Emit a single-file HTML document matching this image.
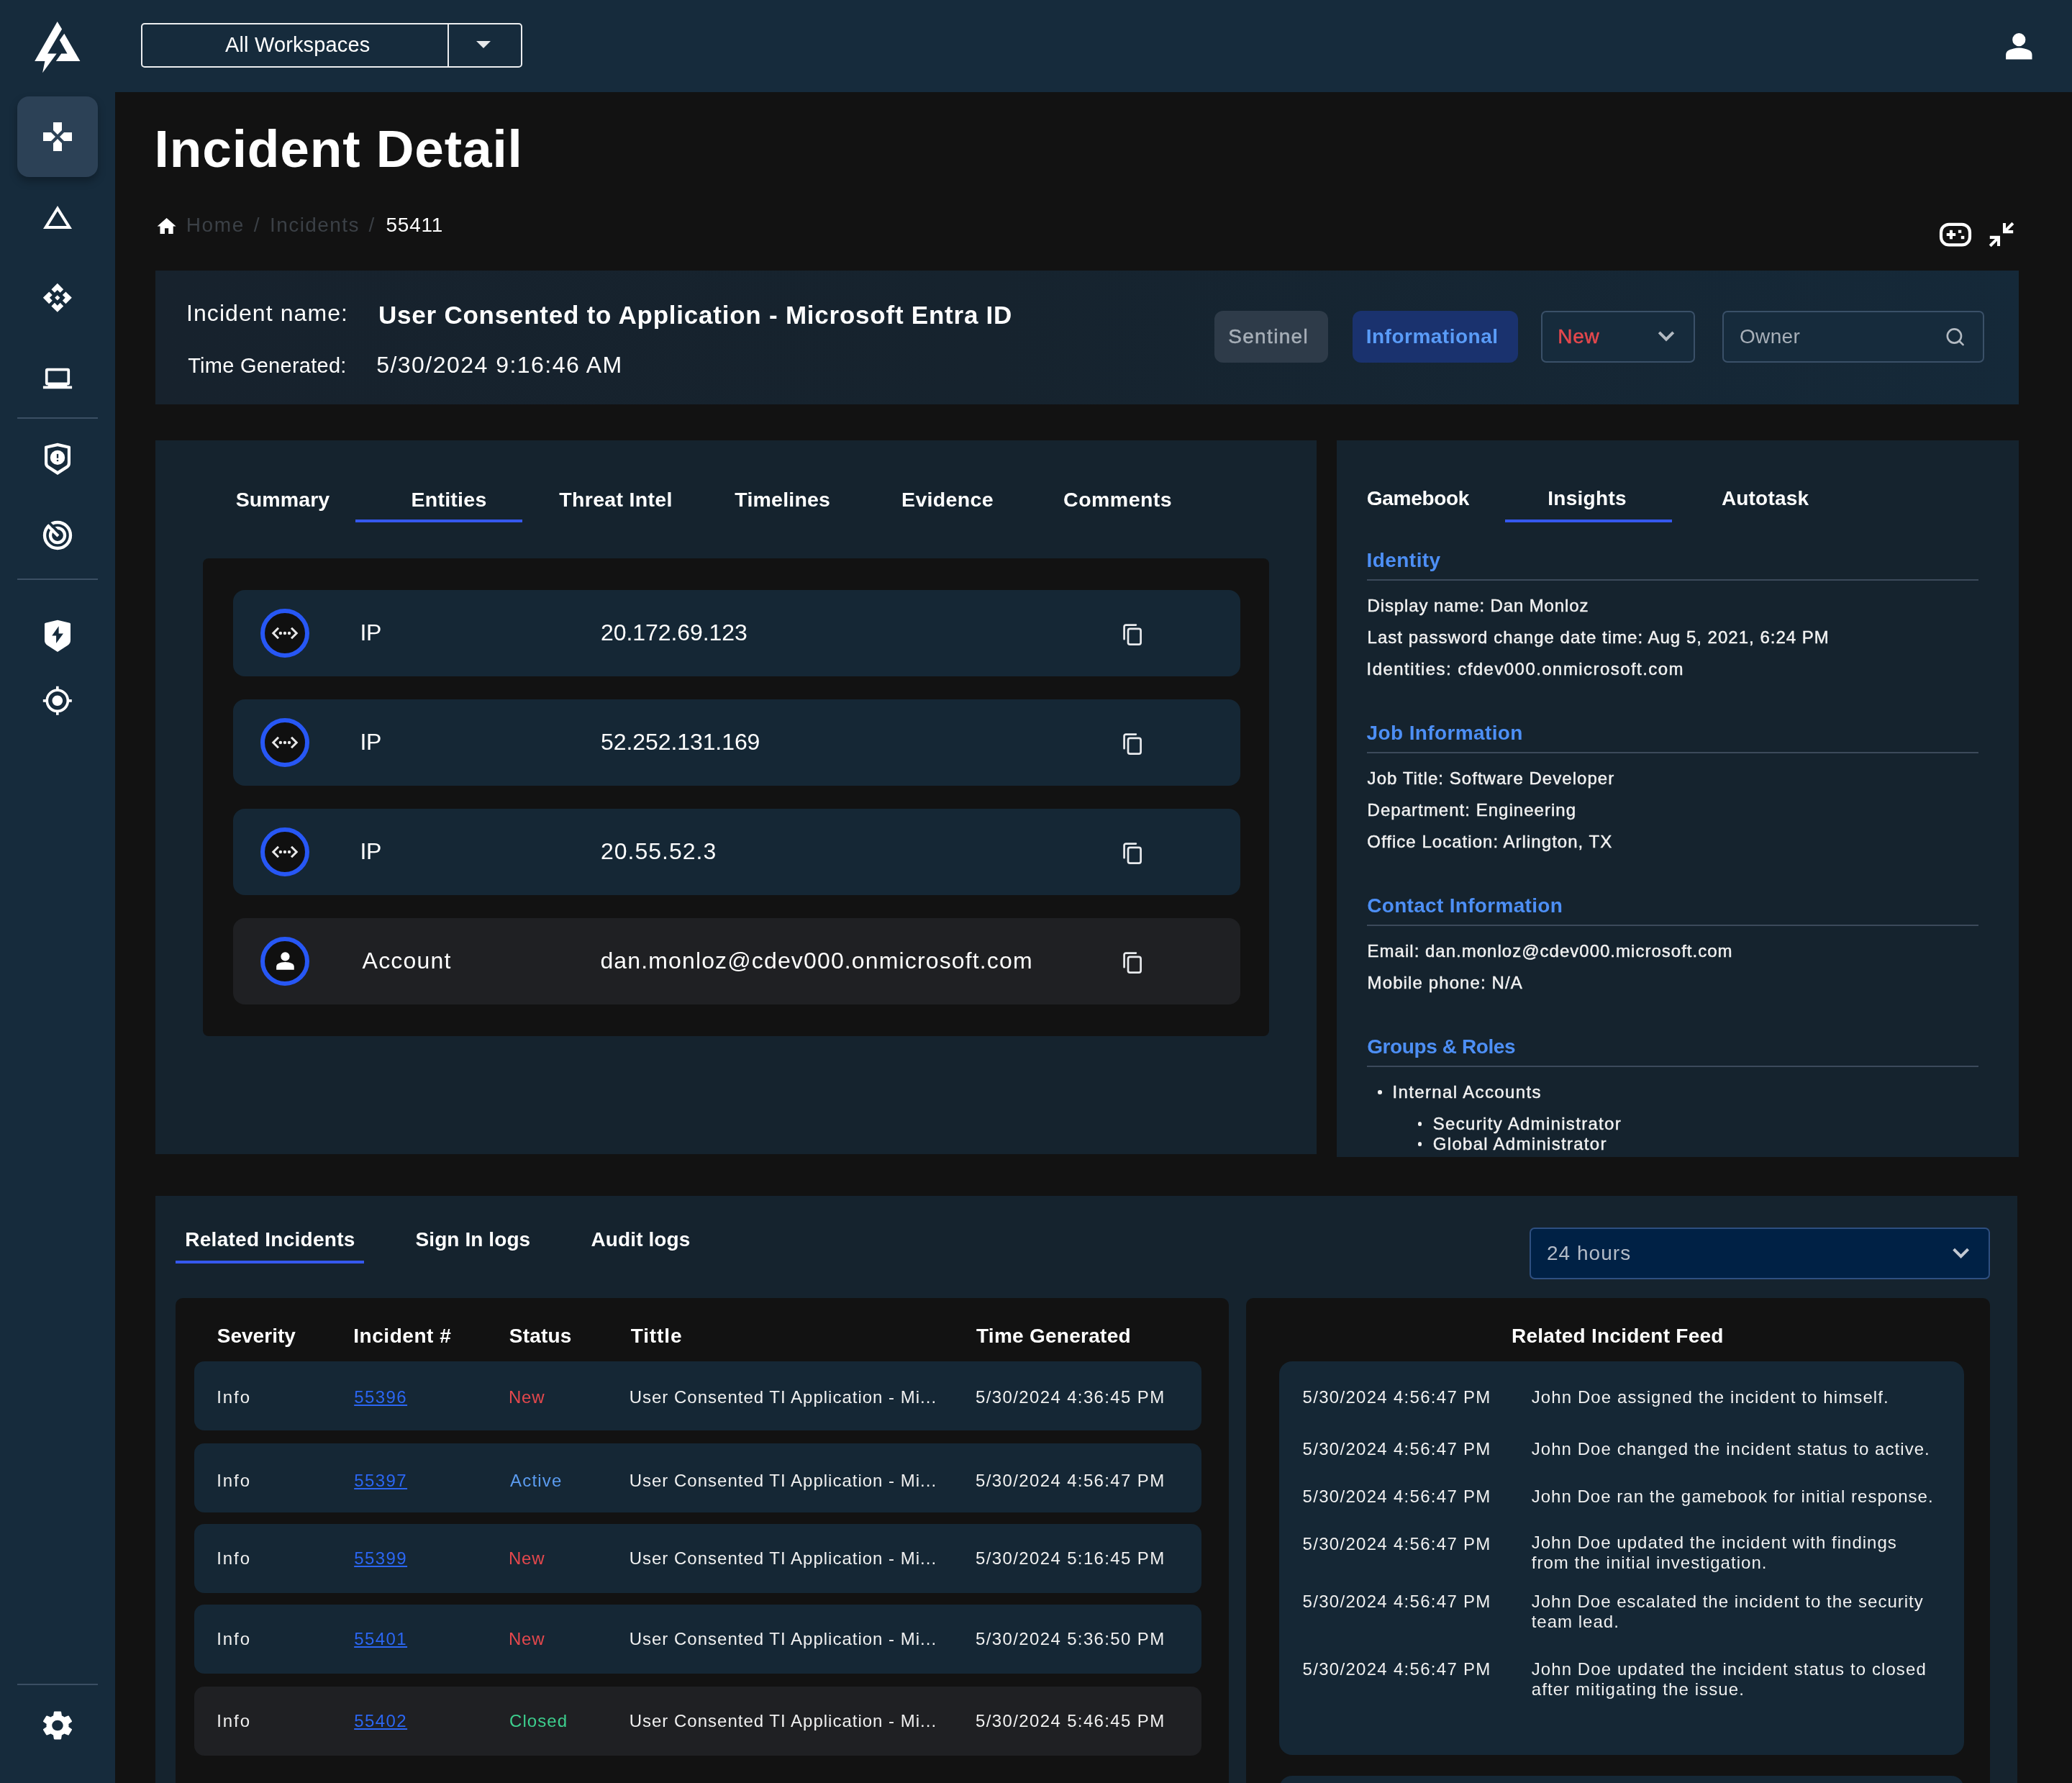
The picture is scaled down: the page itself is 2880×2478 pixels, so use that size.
<!DOCTYPE html>
<html lang="en"><head><meta charset="utf-8"><title>Incident Detail</title>
<meta name="viewport" content="width=2880">
<style>
*{box-sizing:border-box;margin:0;padding:0}
html,body{width:2880px;height:2478px;background:#121212}
body{position:relative;font-family:"Liberation Sans",sans-serif;color:#fff;-webkit-font-smoothing:antialiased}
#app{position:absolute;left:0;top:0;width:2880px;height:2478px;overflow:hidden;will-change:transform}
.t{position:absolute;white-space:nowrap;font-weight:400;display:block;text-decoration:none;color:#fff}
.ic{position:absolute;display:block;overflow:visible}
ul,li{list-style:none}
hr{position:absolute;border:0;background:#3b4f63}
.sidebar{position:absolute;left:0;top:0;width:160px;height:2478px;background:#162b3c}
.nav-item{position:absolute;display:block;border-radius:16px}
.nav-item.active{background:#2c4156;box-shadow:0 6px 12px rgba(0,0,0,.28)}
.topbar{position:absolute;left:160px;top:0;width:2720px;height:128px;background:#162b3c}
.ws{position:absolute;border:2px solid #eceef0;border-radius:5px}
.ws-div{position:absolute;top:0;bottom:0;width:2px;background:#eceef0}
.card{position:absolute;background:linear-gradient(90deg,#17222d 0%,#16232e 45%,#152939 100%)}
.badge{position:absolute;border-radius:12px}
.b-sent{background:#2e3b49}.b-info{background:#1a326e}
.sel{position:absolute;border-radius:7px;border:2px solid #3a5068;background:#162b3c}
.s-24{background:#002145;border-color:#2e4f80}
.panel{position:absolute;background:#15232e;overflow:hidden}
.panel hr{background:#3c4a5b}
.ul{position:absolute;background:#3558ee}
.ents{position:absolute;background:#121212;border-radius:8px}
.ent{position:absolute;background:#152735;border-radius:16px}
.gray{background:#1f2023 !important}
.circ{position:absolute;border-radius:50%;border:6px solid #2757f5;background:#101010}
.dot{position:absolute;border-radius:50%;background:#f2f2f2}
.blk{position:absolute;background:#121212;border-radius:10px}
.tr{position:absolute;background:#152735;border-radius:14px}
.feed{position:absolute;background:#152735;border-radius:18px}
</style></head><body><div id="app">
<aside class="sidebar">
<svg class="ic" style="left:40px;top:20px;width:80px;height:90px;" viewBox="40 20 80 90" fill="#fff"><polygon points="79.7,30 86.1,40.5 66.1,74.5 78.7,74.5 59.1,101.3 62.4,85 48.2,85"/><polygon points="89.3,46.7 111.4,85 77.8,85 85.2,74.5 93.5,74.5 82.9,55.7"/></svg>
<nav>
<a class="nav-item active" style="left:24px;top:134px;width:112px;height:112px;"><svg class="ic" style="left:32px;top:32px;width:48px;height:48px;" viewBox="0 0 24 24" fill="#fff"><path d="M15 7.5V2H9v5.5l3 3 3-3zM7.5 9H2v6h5.5l3-3-3-3zM9 16.5V22h6v-5.5l-3-3-3 3zM16.5 9l-3 3 3 3H22V9h-5.5z"/></svg></a>
<a class="nav-item" style="left:24px;top:246px;width:112px;height:112px;"><svg class="ic" style="left:32px;top:32px;width:48px;height:48px;" viewBox="0 0 24 24" fill="#fff"><path d="M12 7.77L18.39 18H5.61L12 7.77M12 4L2 20h20L12 4z"/></svg></a>
<a class="nav-item" style="left:24px;top:358px;width:112px;height:112px;"><svg class="ic" style="left:34.18px;top:34.2px;width:43.64px;height:43.64px;" viewBox="0 0 24 24" fill="#fff"><path d="M14 12l-2 2-2-2 2-2 2 2zm-2-6l2.12 2.12 2.5-2.5L12 1 7.38 5.62l2.5 2.5L12 6zm-6 6l2.12-2.12-2.5-2.5L1 12l4.62 4.62 2.5-2.5L6 12zm12 0l-2.12 2.12 2.5 2.5L23 12l-4.62-4.62-2.5 2.5L18 12zm-6 6l-2.12-2.12-2.5 2.5L12 23l4.62-4.62-2.5-2.5L12 18z"/></svg></a>
<a class="nav-item" style="left:24px;top:470px;width:112px;height:100px;"><svg class="ic" style="left:32px;top:36px;width:48px;height:40px;" viewBox="56 506 48 40" fill="#fff"><path fill-rule="evenodd" d="M66 511.8 h28 a3.1 3.1 0 0 1 3.1 3.1 v17.3 a3.1 3.1 0 0 1 -3.1 3.1 h-0.6 v1.2 h6.7 v3.8 h-40.2 v-3.8 h6.7 v-1.2 h-0.6 a3.1 3.1 0 0 1 -3.1 -3.1 v-17.3 a3.1 3.1 0 0 1 3.1 -3.1 z M66.6 515.5 v15.9 h26.8 v-15.9 z"/></svg></a>
<hr style="left:24px;top:580px;width:112px;height:2px;">
<a class="nav-item" style="left:24px;top:590px;width:112px;height:100px;"><svg class="ic" style="left:32px;top:24px;width:48px;height:48px;" viewBox="0 0 24 24" fill="#fff"><path fill-rule="evenodd" d="M12 0.9 L20.4 2.9 Q21 3.05 21 3.7 V14.7 Q21 17 19.15 18.35 L12 23.05 L4.85 18.35 Q3 17 3 14.7 V3.7 Q3 3.05 3.6 2.9 Z M12 3.15 L18.92 4.62 V14.6 Q18.92 15.9 17.9 16.6 L12 20.4 L6.1 16.6 Q5.08 15.9 5.08 14.6 V4.62 Z"/><circle cx="12" cy="10.94" r="5.1"/><rect x="11.42" y="8.45" width="1.18" height="2.95" fill="#162b3c"/><rect x="11.42" y="12.57" width="1.18" height="1" fill="#162b3c"/></svg></a>
<a class="nav-item" style="left:24px;top:694px;width:112px;height:100px;"><svg class="ic" style="left:32px;top:26px;width:48px;height:48px;" viewBox="56 720 48 48" fill="#fff"><defs><clipPath id="rc"><circle cx="80" cy="744" r="20.15"/></clipPath></defs><g fill="none" stroke="#fff"><circle cx="80" cy="744" r="17.98" stroke-width="4.35"/><circle cx="80" cy="744" r="10.05" stroke-width="4.3"/></g><line x1="82.83" y1="741.17" x2="65.5" y2="723.84" stroke="#162b3c" stroke-width="3.9"/><line x1="80.94" y1="744.94" x2="64" y2="728" stroke="#fff" stroke-width="4.1" clip-path="url(#rc)"/></svg></a>
<hr style="left:24px;top:804px;width:112px;height:2px;">
<a class="nav-item" style="left:24px;top:834px;width:112px;height:100px;"><svg class="ic" style="left:32px;top:26px;width:48px;height:48px;" viewBox="0 0 24 24" fill="#fff"><path d="M12 0.9 L20.4 2.9 Q21 3.05 21 3.7 V14.7 Q21 17 19.15 18.35 L12 23.05 L4.85 18.35 Q3 17 3 14.7 V3.7 Q3 3.05 3.6 2.9 Z"/><polygon fill="#162b3c" points="12.8,5.15 8.1,11.75 11.05,11.75 11.05,16.95 16,10.2 12.8,10.2"/></svg></a>
<a class="nav-item" style="left:24px;top:934px;width:112px;height:80px;"><svg class="ic" style="left:34.18px;top:18.2px;width:43.64px;height:43.64px;" viewBox="0 0 24 24" fill="#fff"><path d="M12 8c-2.21 0-4 1.79-4 4s1.79 4 4 4 4-1.79 4-4-1.79-4-4-4zm8.94 3c-.46-4.17-3.77-7.48-7.94-7.94V1h-2v2.06C6.83 3.52 3.52 6.83 3.06 11H1v2h2.06c.46 4.17 3.77 7.48 7.94 7.94V23h2v-2.06c4.17-.46 7.48-3.77 7.94-7.94H23v-2h-2.06zM12 19c-3.87 0-7-3.13-7-7s3.13-7 7-7 7 3.13 7 7-3.13 7-7 7z"/></svg></a>
</nav>
<hr style="left:24px;top:2340px;width:112px;height:2px;">
<a class="nav-item" style="left:24px;top:2350px;width:112px;height:100px;"><svg class="ic" style="left:32px;top:24px;width:48px;height:48px;" viewBox="0 0 24 24" fill="#fff"><path transform="translate(12 12) scale(1.075 1.01) translate(-12 -12)" d="M19.14 12.94c.04-.3.06-.61.06-.94 0-.32-.02-.64-.07-.94l2.03-1.58c.18-.14.23-.41.12-.61l-1.92-3.32c-.12-.22-.37-.29-.59-.22l-2.39.96c-.5-.38-1.03-.7-1.62-.94l-.36-2.54c-.04-.24-.24-.41-.48-.41h-3.84c-.24 0-.43.17-.47.41l-.36 2.54c-.59.24-1.13.57-1.62.94l-2.39-.96c-.22-.08-.47 0-.59.22L2.74 8.87c-.12.21-.08.47.12.61l2.03 1.58c-.05.3-.09.63-.09.94s.02.64.07.94l-2.03 1.58c-.18.14-.23.41-.12.61l1.92 3.32c.12.22.37.29.59.22l2.39-.96c.5.38 1.03.7 1.62.94l.36 2.54c.05.24.24.41.48.41h3.84c.24 0 .44-.17.47-.41l.36-2.54c.59-.24 1.13-.56 1.62-.94l2.39.96c.22.08.47 0 .59-.22l1.92-3.32c.12-.22.07-.47-.12-.61l-2.01-1.58zM12 15.6c-1.98 0-3.6-1.62-3.6-3.6s1.62-3.6 3.6-3.6 3.6 1.62 3.6 3.6-1.62 3.6-3.6 3.6z"/></svg></a>
</aside>
<header class="topbar">
<div class="ws" style="left:36px;top:32px;width:530px;height:62px;">
<span class="t" style="left:115px;top:14.3px;font-size:29px;line-height:29px;letter-spacing:0.15px;">All Workspaces</span>
<i class="ws-div" style="left:424px"></i>
<svg class="ic" style="left:464px;top:23px;width:20px;height:10px;" viewBox="0 0 20 10" fill="#e6e8ea"><polygon points="0,0 20,0 10,10"/></svg>
</div>
<svg class="ic" style="left:2618.8px;top:36.5px;width:54.6px;height:54.6px;" viewBox="0 0 24 24" fill="#fff"><path d="M12 12q-1.65 0-2.825-1.175T8 8q0-1.65 1.175-2.825T12 4q1.65 0 2.825 1.175T16 8q0 1.65-1.175 2.825T12 12Zm-8 8v-2.8q0-.85.438-1.563.437-.712 1.162-1.087 1.55-.775 3.15-1.163Q10.35 13 12 13t3.25.387q1.6.388 3.15 1.163.725.375 1.162 1.087Q20 16.35 20 17.2V20Z"/></svg>
</header>
<main>
<h1 class="t" style="left:214.5px;top:170.2px;font-size:73px;line-height:73px;font-weight:700;letter-spacing:0.89px;">Incident Detail</h1>
<nav class="crumbs">
<svg class="ic" style="left:216.1px;top:298.5px;width:31.2px;height:31.2px;" viewBox="0 0 24 24" fill="#fff"><path d="M10 20v-6h4v6h5v-8h3L12 3 2 12h3v8z"/></svg>
<span class="t" style="left:258.8px;top:299.1px;font-size:28px;line-height:28px;letter-spacing:1.6px;color:#3b4046;">Home</span>
<span class="t" style="left:352.8px;top:299.1px;font-size:28px;line-height:28px;color:#3b4046;">/</span>
<span class="t" style="left:375px;top:299.1px;font-size:28px;line-height:28px;letter-spacing:1.43px;color:#3b4046;">Incidents</span>
<span class="t" style="left:512.5px;top:299.1px;font-size:28px;line-height:28px;color:#3b4046;">/</span>
<span class="t" style="left:536.5px;top:299.1px;font-size:28px;line-height:28px;letter-spacing:0.75px;">55411</span>
</nav>
<svg class="ic" style="left:2690px;top:300px;width:56px;height:52px;" viewBox="2690 300 56 52" fill="#fff"><rect x="2698" y="311.8" width="40" height="28.6" rx="11" ry="11" fill="none" stroke="#fff" stroke-width="4.2"/><rect x="2705.7" y="324" width="12.5" height="4"/><rect x="2709.9" y="319.8" width="4.1" height="12.5"/><rect x="2721.9" y="319.7" width="4.4" height="4.1"/><rect x="2725.8" y="327.9" width="4.5" height="4.3"/></svg>
<svg class="ic" style="left:2758px;top:300px;width:48px;height:52px;" viewBox="2758 300 48 52" fill="#fff"><g fill="none" stroke="#fff" stroke-width="4.1"><polyline points="2786,309.9 2786,322.1 2798.2,322.1"/><line x1="2786" y1="322.1" x2="2797.9" y2="310.2"/><polyline points="2765.8,329.9 2778,329.9 2778,342.1"/><line x1="2778" y1="329.9" x2="2766.2" y2="341.7"/></g></svg>
<section class="card" style="left:216px;top:376px;width:2590px;height:186px;">
<dl>
<dt class="t" style="left:43px;top:43.3px;font-size:32px;line-height:32px;letter-spacing:1.08px;">Incident name:</dt>
<dd class="t" style="left:310px;top:44.1px;font-size:35px;line-height:35px;font-weight:700;letter-spacing:0.77px;">User Consented to Application - Microsoft Entra ID</dd>
<dt class="t" style="left:45.2px;top:118.1px;font-size:29px;line-height:29px;letter-spacing:0.26px;">Time Generated:</dt>
<dd class="t" style="left:307.2px;top:115px;font-size:32px;line-height:32px;letter-spacing:1.47px;">5/30/2024 9:16:46 AM</dd>
</dl>
<div class="badge b-sent" style="left:1472px;top:56px;width:158px;height:72px;"><span class="t" style="left:19.2px;top:22.3px;font-size:28px;line-height:28px;letter-spacing:1.34px;color:#a7afb8;-webkit-text-stroke:0.5px currentColor;">Sentinel</span></div>
<div class="badge b-info" style="left:1664px;top:56px;width:230px;height:72px;"><span class="t" style="left:18.7px;top:22.3px;font-size:28px;line-height:28px;font-weight:700;letter-spacing:0.5px;color:#5a9cf8;">Informational</span></div>
<div class="sel s-new" style="left:1926px;top:56px;width:214px;height:72px;"><span class="t" style="left:21.2px;top:20px;font-size:28px;line-height:28px;letter-spacing:0.8px;color:#e5484d;-webkit-text-stroke:0.5px currentColor;">New</span><svg class="ic" style="left:156px;top:18px;width:32px;height:28px;" viewBox="2300 452 32 28" fill="#fff"><polyline points="2306.2,461.8 2316,471.6 2325.8,461.8" fill="none" stroke="#b3bac2" stroke-width="4"/></svg></div>
<div class="sel s-own" style="left:2178px;top:56px;width:364px;height:72px;"><span class="t" style="left:21.9px;top:20px;font-size:28px;line-height:28px;letter-spacing:0.38px;color:#a7afb8;">Owner</span><svg class="ic" style="left:304px;top:16px;width:36px;height:36px;" viewBox="2700 450 36 36" fill="#fff"><g fill="none" stroke="#b3bac2" stroke-width="2.6" stroke-linecap="round"><circle cx="2716.4" cy="467" r="9.6"/><line x1="2723.4" y1="474" x2="2728.6" y2="479.2"/></g></svg></div>
</section>
<section class="panel" style="left:216px;top:612px;width:1614px;height:992px;">
<div class="tabs">
<a class="t" style="left:111.7px;top:68px;font-size:28.5px;line-height:28.5px;font-weight:700;letter-spacing:0.1px;">Summary</a>
<a class="t" style="left:355.5px;top:68px;font-size:28.5px;line-height:28.5px;font-weight:700;letter-spacing:0.26px;">Entities</a>
<a class="t" style="left:561.3px;top:68px;font-size:28.5px;line-height:28.5px;font-weight:700;letter-spacing:0.31px;">Threat Intel</a>
<a class="t" style="left:805.3px;top:68px;font-size:28.5px;line-height:28.5px;font-weight:700;letter-spacing:0.21px;">Timelines</a>
<a class="t" style="left:1037.1px;top:68px;font-size:28.5px;line-height:28.5px;font-weight:700;letter-spacing:0.33px;">Evidence</a>
<a class="t" style="left:1262.1px;top:68px;font-size:28.5px;line-height:28.5px;font-weight:700;letter-spacing:0.47px;">Comments</a>
<i class="ul" style="left:278px;top:110px;width:232px;height:4px;"></i>
</div>
<ul class="ents" style="left:66px;top:164px;width:1482px;height:664px;">
<li class="ent" style="left:42px;top:44px;width:1400px;height:120px;">
<span class="circ" style="left:38px;top:26px;width:68px;height:68px;"><svg class="ic" style="left:-6px;top:-6px;width:68px;height:68px" viewBox="1 1 68 68"><g fill="none" stroke="#e9e9e9" stroke-width="3" stroke-linejoin="miter"><polyline points="26,27.8 18.8,35 26,42.2"/><polyline points="44,27.8 51.2,35 44,42.2"/></g><g fill="#e9e9e9"><circle cx="28.9" cy="35" r="2.2"/><circle cx="34.95" cy="35" r="2.2"/><circle cx="41" cy="35" r="2.2"/></g></svg></span>
<span class="t" style="left:176.6px;top:43px;font-size:32px;line-height:32px;letter-spacing:-0.5px;">IP</span>
<span class="t" style="left:511px;top:43px;font-size:32px;line-height:32px;letter-spacing:-0.07px;">20.172.69.123</span>
<svg class="ic" style="left:1230px;top:40px;width:40px;height:44px;" viewBox="0 0 40 44" fill="#fff"><g fill="none" stroke="#e9ebee" stroke-width="2.7" stroke-linecap="round" stroke-linejoin="round"><path d="M8.6 28.2 V11 a2.4 2.4 0 0 1 2.4 -2.4 H24.9"/><rect x="14" y="13.8" width="17.6" height="21.8" rx="2.6"/></g></svg>
</li>
<li class="ent" style="left:42px;top:196px;width:1400px;height:120px;">
<span class="circ" style="left:38px;top:26px;width:68px;height:68px;"><svg class="ic" style="left:-6px;top:-6px;width:68px;height:68px" viewBox="1 1 68 68"><g fill="none" stroke="#e9e9e9" stroke-width="3" stroke-linejoin="miter"><polyline points="26,27.8 18.8,35 26,42.2"/><polyline points="44,27.8 51.2,35 44,42.2"/></g><g fill="#e9e9e9"><circle cx="28.9" cy="35" r="2.2"/><circle cx="34.95" cy="35" r="2.2"/><circle cx="41" cy="35" r="2.2"/></g></svg></span>
<span class="t" style="left:176.6px;top:43px;font-size:32px;line-height:32px;letter-spacing:-0.5px;">IP</span>
<span class="t" style="left:511px;top:43px;font-size:32px;line-height:32px;letter-spacing:-0.08px;">52.252.131.169</span>
<svg class="ic" style="left:1230px;top:40px;width:40px;height:44px;" viewBox="0 0 40 44" fill="#fff"><g fill="none" stroke="#e9ebee" stroke-width="2.7" stroke-linecap="round" stroke-linejoin="round"><path d="M8.6 28.2 V11 a2.4 2.4 0 0 1 2.4 -2.4 H24.9"/><rect x="14" y="13.8" width="17.6" height="21.8" rx="2.6"/></g></svg>
</li>
<li class="ent" style="left:42px;top:348px;width:1400px;height:120px;">
<span class="circ" style="left:38px;top:26px;width:68px;height:68px;"><svg class="ic" style="left:-6px;top:-6px;width:68px;height:68px" viewBox="1 1 68 68"><g fill="none" stroke="#e9e9e9" stroke-width="3" stroke-linejoin="miter"><polyline points="26,27.8 18.8,35 26,42.2"/><polyline points="44,27.8 51.2,35 44,42.2"/></g><g fill="#e9e9e9"><circle cx="28.9" cy="35" r="2.2"/><circle cx="34.95" cy="35" r="2.2"/><circle cx="41" cy="35" r="2.2"/></g></svg></span>
<span class="t" style="left:176.6px;top:43px;font-size:32px;line-height:32px;letter-spacing:-0.5px;">IP</span>
<span class="t" style="left:511px;top:43px;font-size:32px;line-height:32px;letter-spacing:1px;">20.55.52.3</span>
<svg class="ic" style="left:1230px;top:40px;width:40px;height:44px;" viewBox="0 0 40 44" fill="#fff"><g fill="none" stroke="#e9ebee" stroke-width="2.7" stroke-linecap="round" stroke-linejoin="round"><path d="M8.6 28.2 V11 a2.4 2.4 0 0 1 2.4 -2.4 H24.9"/><rect x="14" y="13.8" width="17.6" height="21.8" rx="2.6"/></g></svg>
</li>
<li class="ent gray" style="left:42px;top:500px;width:1400px;height:120px;">
<span class="circ" style="left:38px;top:26px;width:68px;height:68px;"><svg class="ic" style="left:9.55px;top:8.75px;width:36.9px;height:36.9px;" viewBox="0 0 24 24" fill="#fff"><path d="M12 12q-1.65 0-2.825-1.175T8 8q0-1.65 1.175-2.825T12 4q1.65 0 2.825 1.175T16 8q0 1.65-1.175 2.825T12 12Zm-8 8v-2.8q0-.85.438-1.563.437-.712 1.162-1.087 1.55-.775 3.15-1.163Q10.35 13 12 13t3.25.387q1.6.388 3.15 1.163.725.375 1.162 1.087Q20 16.35 20 17.2V20Z"/></svg></span>
<span class="t" style="left:179.6px;top:43px;font-size:32px;line-height:32px;letter-spacing:1.2px;">Account</span>
<span class="t" style="left:510.4px;top:43px;font-size:32px;line-height:32px;letter-spacing:1.14px;">dan.monloz@cdev000.onmicrosoft.com</span>
<svg class="ic" style="left:1230px;top:40px;width:40px;height:44px;" viewBox="0 0 40 44" fill="#fff"><g fill="none" stroke="#e9ebee" stroke-width="2.7" stroke-linecap="round" stroke-linejoin="round"><path d="M8.6 28.2 V11 a2.4 2.4 0 0 1 2.4 -2.4 H24.9"/><rect x="14" y="13.8" width="17.6" height="21.8" rx="2.6"/></g></svg>
</li>
</ul>
</section>
<section class="panel rp" style="left:1858px;top:612px;width:948px;height:996px;">
<div class="tabs">
<a class="t" style="left:41.8px;top:66.9px;font-size:28px;line-height:28px;font-weight:700;letter-spacing:-0.3px;">Gamebook</a>
<a class="t" style="left:293.2px;top:66.9px;font-size:28px;line-height:28px;font-weight:700;letter-spacing:0.3px;">Insights</a>
<a class="t" style="left:534.9px;top:66.9px;font-size:28px;line-height:28px;font-weight:700;letter-spacing:0.19px;">Autotask</a>
<i class="ul" style="left:234px;top:110px;width:232px;height:4px;"></i>
</div>
<div class="sec">
<h3 class="t" style="left:41.6px;top:153px;font-size:28px;line-height:28px;font-weight:700;letter-spacing:0.43px;color:#4d8ff5;">Identity</h3>
<hr style="left:42px;top:193px;width:850px;height:2px;">
<p class="t" style="left:42.6px;top:218px;font-size:24px;line-height:24px;letter-spacing:0.87px;color:#f2f2f2;-webkit-text-stroke:0.45px currentColor;">Display name: Dan Monloz</p>
<p class="t" style="left:42.6px;top:261.8px;font-size:24px;line-height:24px;letter-spacing:1.01px;color:#f2f2f2;-webkit-text-stroke:0.45px currentColor;">Last password change date time: Aug 5, 2021, 6:24 PM</p>
<p class="t" style="left:41.6px;top:305.6px;font-size:24px;line-height:24px;letter-spacing:1.44px;color:#f2f2f2;-webkit-text-stroke:0.45px currentColor;">Identities: cfdev000.onmicrosoft.com</p>
</div>
<div class="sec">
<h3 class="t" style="left:41.6px;top:393px;font-size:28px;line-height:28px;font-weight:700;letter-spacing:0.38px;color:#4d8ff5;">Job Information</h3>
<hr style="left:42px;top:433px;width:850px;height:2px;">
<p class="t" style="left:42.6px;top:458px;font-size:24px;line-height:24px;letter-spacing:1.04px;color:#f2f2f2;-webkit-text-stroke:0.45px currentColor;">Job Title: Software Developer</p>
<p class="t" style="left:42.6px;top:501.8px;font-size:24px;line-height:24px;letter-spacing:1.03px;color:#f2f2f2;-webkit-text-stroke:0.45px currentColor;">Department: Engineering</p>
<p class="t" style="left:42.2px;top:545.6px;font-size:24px;line-height:24px;letter-spacing:1.04px;color:#f2f2f2;-webkit-text-stroke:0.45px currentColor;">Office Location: Arlington, TX</p>
</div>
<div class="sec">
<h3 class="t" style="left:42.2px;top:633px;font-size:28px;line-height:28px;font-weight:700;letter-spacing:0.31px;color:#4d8ff5;">Contact Information</h3>
<hr style="left:42px;top:673px;width:850px;height:2px;">
<p class="t" style="left:42.6px;top:698px;font-size:24px;line-height:24px;letter-spacing:1.01px;color:#f2f2f2;-webkit-text-stroke:0.45px currentColor;">Email: dan.monloz@cdev000.microsoft.com</p>
<p class="t" style="left:42.6px;top:741.8px;font-size:24px;line-height:24px;letter-spacing:1.11px;color:#f2f2f2;-webkit-text-stroke:0.45px currentColor;">Mobile phone: N/A</p>
</div>
<div class="sec">
<h3 class="t" style="left:42.2px;top:829px;font-size:28px;line-height:28px;font-weight:700;letter-spacing:-0.4px;color:#4d8ff5;">Groups &amp; Roles</h3>
<hr style="left:42px;top:869px;width:850px;height:2px;">
<ul>
<li><i class="dot" style="left:57px;top:903px;width:5.6px;height:5.6px;"></i><span class="t" style="left:77.4px;top:894px;font-size:24px;line-height:24px;letter-spacing:1.38px;color:#f2f2f2;-webkit-text-stroke:0.45px currentColor;">Internal Accounts</span></li>
<li><i class="dot" style="left:112.7px;top:947px;width:5.6px;height:5.6px;"></i><span class="t" style="left:133.8px;top:938px;font-size:24px;line-height:24px;letter-spacing:1.31px;color:#f2f2f2;-webkit-text-stroke:0.45px currentColor;">Security Administrator</span></li>
<li><i class="dot" style="left:112.7px;top:975px;width:5.6px;height:5.6px;"></i><span class="t" style="left:133.8px;top:966px;font-size:24px;line-height:24px;letter-spacing:1.29px;color:#f2f2f2;-webkit-text-stroke:0.45px currentColor;">Global Administrator</span></li>
</ul>
</div>
</section>
<section class="panel" style="left:216px;top:1662px;width:2588px;height:900px;">
<div class="tabs">
<a class="t" style="left:41.3px;top:47px;font-size:28px;line-height:28px;font-weight:700;letter-spacing:0.26px;">Related Incidents</a>
<a class="t" style="left:361.5px;top:47px;font-size:28px;line-height:28px;font-weight:700;letter-spacing:0.09px;">Sign In logs</a>
<a class="t" style="left:605.5px;top:47px;font-size:28px;line-height:28px;font-weight:700;letter-spacing:0.11px;">Audit logs</a>
<i class="ul" style="left:28px;top:90px;width:262px;height:4px;"></i>
</div>
<div class="sel s-24" style="left:1910px;top:44px;width:640px;height:72px;"><span class="t" style="left:21.9px;top:20.4px;font-size:28px;line-height:28px;letter-spacing:1.04px;color:#b4bcc8;">24 hours</span><svg class="ic" style="left:580px;top:18px;width:36px;height:30px;" viewBox="2708 1726 36 30" fill="#fff"><polyline points="2715.6,1736.2 2725.6,1746.2 2735.6,1736.2" fill="none" stroke="#c3c9d2" stroke-width="4"/></svg></div>
<div class="blk" style="left:28px;top:142px;width:1464px;height:760px;" role="table">
<div class="thead" role="row">
<span class="t" style="left:57.7px;top:39.1px;font-size:28px;line-height:28px;font-weight:700;letter-spacing:0.03px;" role="columnheader">Severity</span>
<span class="t" style="left:247.3px;top:39.1px;font-size:28px;line-height:28px;font-weight:700;letter-spacing:0.53px;" role="columnheader">Incident #</span>
<span class="t" style="left:463.8px;top:39.1px;font-size:28px;line-height:28px;font-weight:700;letter-spacing:0.2px;" role="columnheader">Status</span>
<span class="t" style="left:632.7px;top:39.1px;font-size:28px;line-height:28px;font-weight:700;letter-spacing:0.9px;" role="columnheader">Tittle</span>
<span class="t" style="left:1113px;top:39.1px;font-size:28px;line-height:28px;font-weight:700;letter-spacing:0.27px;" role="columnheader">Time Generated</span>
</div>
<div class="tr" role="row" style="left:26px;top:88px;width:1400px;height:96px;">
<span class="t" style="left:31.3px;top:38px;font-size:24px;line-height:24px;letter-spacing:1.9px;color:#f0f0f0;">Info</span>
<a class="t" style="left:222.2px;top:38px;font-size:24px;line-height:24px;letter-spacing:1.43px;color:#2b66f2;text-decoration:underline;text-decoration-thickness:2px;text-underline-offset:1.5px;">55396</a>
<span class="t" style="left:437px;top:38px;font-size:24px;line-height:24px;letter-spacing:0.75px;color:#e5484d;">New</span>
<span class="t" style="left:604.7px;top:38px;font-size:24px;line-height:24px;letter-spacing:1px;color:#f0f0f0;">User Consented TI Application - Mi...</span>
<span class="t" style="left:1086px;top:38px;font-size:24px;line-height:24px;letter-spacing:1.37px;color:#f0f0f0;">5/30/2024 4:36:45 PM</span>
</div>
<div class="tr" role="row" style="left:26px;top:202px;width:1400px;height:96px;">
<span class="t" style="left:31.3px;top:39.8px;font-size:24px;line-height:24px;letter-spacing:1.9px;color:#f0f0f0;">Info</span>
<a class="t" style="left:222.2px;top:39.8px;font-size:24px;line-height:24px;letter-spacing:1.43px;color:#2b66f2;text-decoration:underline;text-decoration-thickness:2px;text-underline-offset:1.5px;">55397</a>
<span class="t" style="left:439px;top:39.8px;font-size:24px;line-height:24px;letter-spacing:1.2px;color:#5b9cf0;">Active</span>
<span class="t" style="left:604.7px;top:39.8px;font-size:24px;line-height:24px;letter-spacing:1px;color:#f0f0f0;">User Consented TI Application - Mi...</span>
<span class="t" style="left:1086px;top:39.8px;font-size:24px;line-height:24px;letter-spacing:1.37px;color:#f0f0f0;">5/30/2024 4:56:47 PM</span>
</div>
<div class="tr" role="row" style="left:26px;top:314px;width:1400px;height:96px;">
<span class="t" style="left:31.3px;top:35.8px;font-size:24px;line-height:24px;letter-spacing:1.9px;color:#f0f0f0;">Info</span>
<a class="t" style="left:222.2px;top:35.8px;font-size:24px;line-height:24px;letter-spacing:1.43px;color:#2b66f2;text-decoration:underline;text-decoration-thickness:2px;text-underline-offset:1.5px;">55399</a>
<span class="t" style="left:437px;top:35.8px;font-size:24px;line-height:24px;letter-spacing:0.75px;color:#e5484d;">New</span>
<span class="t" style="left:604.7px;top:35.8px;font-size:24px;line-height:24px;letter-spacing:1px;color:#f0f0f0;">User Consented TI Application - Mi...</span>
<span class="t" style="left:1086px;top:35.8px;font-size:24px;line-height:24px;letter-spacing:1.37px;color:#f0f0f0;">5/30/2024 5:16:45 PM</span>
</div>
<div class="tr" role="row" style="left:26px;top:426px;width:1400px;height:96px;">
<span class="t" style="left:31.3px;top:36px;font-size:24px;line-height:24px;letter-spacing:1.9px;color:#f0f0f0;">Info</span>
<a class="t" style="left:222.2px;top:36px;font-size:24px;line-height:24px;letter-spacing:1.43px;color:#2b66f2;text-decoration:underline;text-decoration-thickness:2px;text-underline-offset:1.5px;">55401</a>
<span class="t" style="left:437px;top:36px;font-size:24px;line-height:24px;letter-spacing:0.75px;color:#e5484d;">New</span>
<span class="t" style="left:604.7px;top:36px;font-size:24px;line-height:24px;letter-spacing:1px;color:#f0f0f0;">User Consented TI Application - Mi...</span>
<span class="t" style="left:1086px;top:36px;font-size:24px;line-height:24px;letter-spacing:1.37px;color:#f0f0f0;">5/30/2024 5:36:50 PM</span>
</div>
<div class="tr gray" role="row" style="left:26px;top:540px;width:1400px;height:96px;">
<span class="t" style="left:31.3px;top:35.8px;font-size:24px;line-height:24px;letter-spacing:1.9px;color:#f0f0f0;">Info</span>
<a class="t" style="left:222.2px;top:35.8px;font-size:24px;line-height:24px;letter-spacing:1.43px;color:#2b66f2;text-decoration:underline;text-decoration-thickness:2px;text-underline-offset:1.5px;">55402</a>
<span class="t" style="left:438px;top:35.8px;font-size:24px;line-height:24px;letter-spacing:1.08px;color:#3dcf8e;">Closed</span>
<span class="t" style="left:604.7px;top:35.8px;font-size:24px;line-height:24px;letter-spacing:1px;color:#f0f0f0;">User Consented TI Application - Mi...</span>
<span class="t" style="left:1086px;top:35.8px;font-size:24px;line-height:24px;letter-spacing:1.37px;color:#f0f0f0;">5/30/2024 5:46:45 PM</span>
</div>
</div>
<div class="blk" style="left:1516px;top:142px;width:1034px;height:760px;">
<h4 class="t" style="left:369px;top:38.6px;font-size:28px;line-height:28px;font-weight:700;letter-spacing:0.25px;">Related Incident Feed</h4>
<ul class="feed" style="left:46px;top:88px;width:952px;height:547px;">
<li><time class="t" style="left:32.6px;top:38.2px;font-size:24px;line-height:24px;letter-spacing:1.29px;color:#f0f0f0;">5/30/2024 4:56:47 PM</time><p class="t" style="left:350.7px;top:36.2px;font-size:24px;line-height:28px;letter-spacing:1.1px;color:#f0f0f0;">John Doe assigned the incident to himself.</p></li>
<li><time class="t" style="left:32.6px;top:110.1px;font-size:24px;line-height:24px;letter-spacing:1.29px;color:#f0f0f0;">5/30/2024 4:56:47 PM</time><p class="t" style="left:350.7px;top:108.1px;font-size:24px;line-height:28px;letter-spacing:1.06px;color:#f0f0f0;">John Doe changed the incident status to active.</p></li>
<li><time class="t" style="left:32.6px;top:176.2px;font-size:24px;line-height:24px;letter-spacing:1.29px;color:#f0f0f0;">5/30/2024 4:56:47 PM</time><p class="t" style="left:350.7px;top:174.2px;font-size:24px;line-height:28px;letter-spacing:1.02px;color:#f0f0f0;">John Doe ran the gamebook for initial response.</p></li>
<li><time class="t" style="left:32.6px;top:241.7px;font-size:24px;line-height:24px;letter-spacing:1.29px;color:#f0f0f0;">5/30/2024 4:56:47 PM</time><p class="t" style="left:350.7px;top:238px;font-size:24px;line-height:28px;letter-spacing:1.02px;color:#f0f0f0;">John Doe updated the incident with findings<br>from the initial investigation.</p></li>
<li><time class="t" style="left:32.6px;top:322px;font-size:24px;line-height:24px;letter-spacing:1.29px;color:#f0f0f0;">5/30/2024 4:56:47 PM</time><p class="t" style="left:350.7px;top:319.5px;font-size:24px;line-height:28px;letter-spacing:1.01px;color:#f0f0f0;">John Doe escalated the incident to the security<br>team lead.</p></li>
<li><time class="t" style="left:32.6px;top:415.9px;font-size:24px;line-height:24px;letter-spacing:1.29px;color:#f0f0f0;">5/30/2024 4:56:47 PM</time><p class="t" style="left:350.7px;top:413.5px;font-size:24px;line-height:28px;letter-spacing:1.09px;color:#f0f0f0;">John Doe updated the incident status to closed<br>after mitigating the issue.</p></li>
</ul>
<ul class="feed" style="left:46px;top:664px;width:952px;height:200px;"></ul>
</div>
</section>
</main>
</div></body></html>
